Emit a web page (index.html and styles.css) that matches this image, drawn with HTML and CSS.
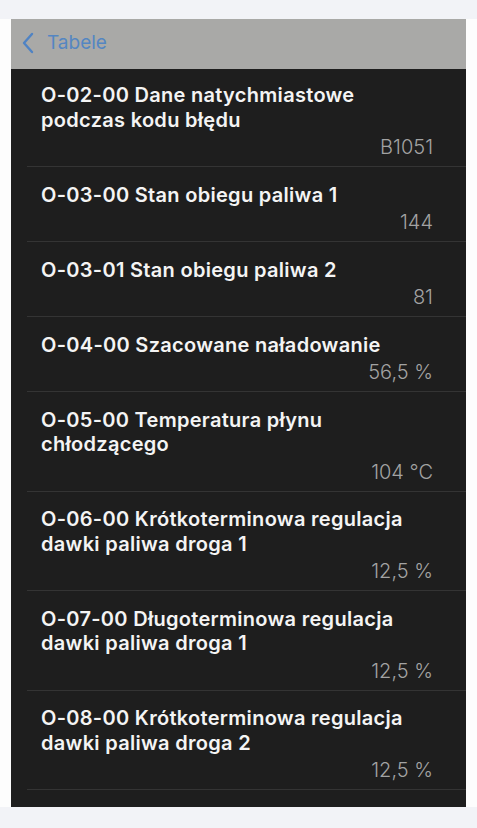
FILE: index.html
```html
<!DOCTYPE html>
<html lang="pl">
<head>
    <meta charset="UTF-8">
    <meta name="viewport" content="width=device-width, initial-scale=1.0">
    <title>Tabele</title>
    <link rel="stylesheet" href="styles.css">
</head>
<body>

    <div class="top-band"></div>

    <div class="frame">
        <div class="screen">
            <!-- Pasek nawigacji -->
            <div class="nav">
                <svg class="chevron" width="13" height="22" viewBox="0 0 13 22">
                    <path d="M11 2 L3 11 L11 20" fill="none" stroke="#4f83c4" stroke-width="2.4" stroke-linecap="round" stroke-linejoin="round"/>
                </svg>
                <span class="nav-title">Tabele</span>
            </div>

            <!-- Lista parametrów -->
            <ul class="list">
                <li class="row">
                    <div class="row-title">O-02-00 Dane natychmiastowe podczas kodu błędu</div>
                    <div class="row-value">B1051</div>
                </li>
                <li class="row">
                    <div class="row-title">O-03-00 Stan obiegu paliwa 1</div>
                    <div class="row-value">144</div>
                </li>
                <li class="row">
                    <div class="row-title">O-03-01 Stan obiegu paliwa 2</div>
                    <div class="row-value">81</div>
                </li>
                <li class="row">
                    <div class="row-title">O-04-00 Szacowane naładowanie</div>
                    <div class="row-value">56,5 %</div>
                </li>
                <li class="row">
                    <div class="row-title">O-05-00 Temperatura płynu chłodzącego</div>
                    <div class="row-value">104 °C</div>
                </li>
                <li class="row">
                    <div class="row-title">O-06-00 Krótkoterminowa regulacja dawki paliwa droga 1</div>
                    <div class="row-value">12,5 %</div>
                </li>
                <li class="row">
                    <div class="row-title">O-07-00 Długoterminowa regulacja dawki paliwa droga 1</div>
                    <div class="row-value">12,5 %</div>
                </li>
                <li class="row">
                    <div class="row-title">O-08-00 Krótkoterminowa regulacja dawki paliwa droga 2</div>
                    <div class="row-value">12,5 %</div>
                </li>
            </ul>
        </div>
    </div>

    <div class="bottom-band"></div>

</body>
</html>
```

FILE: styles.css
```css
body {
    margin: 0;
    background-color: #f2f3f7;
    font-family: Inter, "Noto Sans", sans-serif;
    overflow: hidden;
}

.top-band {
    height: 19px;
}

.bottom-band {
    height: 21px;
}

/* Ramka ze zrzutem */
.frame {
    background-color: #fdfdfd;
    padding: 0 11px;
}

.screen {
    background-color: #1e1e1e;
    height: 788px;
    overflow: hidden;
}

/* Nawigacja */
.nav {
    height: 50px;
    background-color: #a9a9a7;
    display: flex;
    align-items: center;
    padding-left: 10px;
    gap: 13px;
}

.chevron {
    margin-top: -2px;
}

.nav-title {
    color: #5486c2;
    font-size: 19px;
    margin-top: -4px;
}

/* Lista */
.list {
    list-style: none;
    margin: 0;
    padding: 0 0 0 16px;
}

.row {
    padding: 15.5px 33px 6px 14px;
    border-bottom: 1px solid #343434;
}

.row:first-child {
    padding-top: 14px;
}

.row-title {
    color: #f4f4f4;
    font-size: 20px;
    font-weight: 600;
    letter-spacing: 0.3px;
    line-height: 24.5px;
    padding-right: 15px;
}

.row-value {
    color: #a3a3a3;
    font-size: 20px;
    font-weight: 300;
    line-height: 26px;
    padding-top: 2px;
    text-align: right;
}
```
